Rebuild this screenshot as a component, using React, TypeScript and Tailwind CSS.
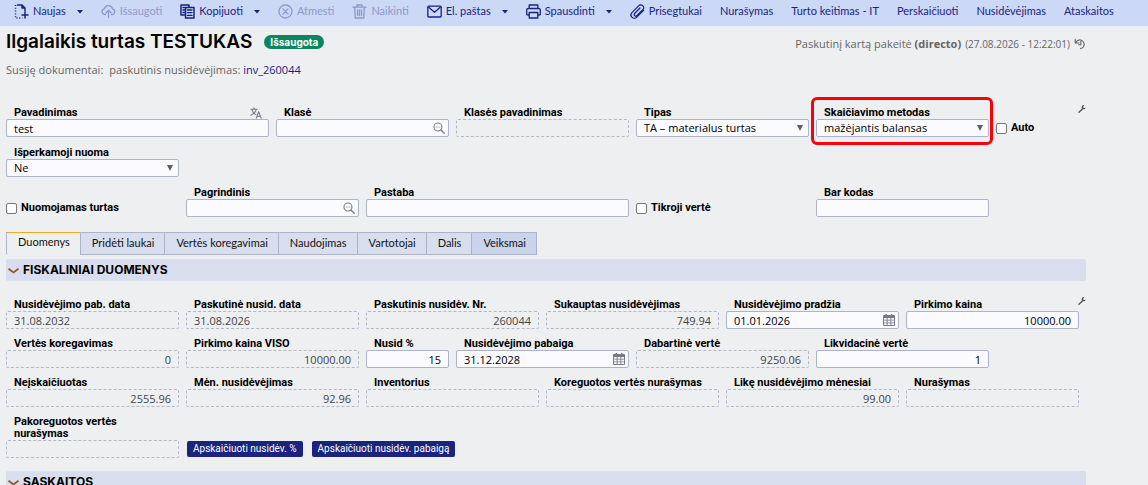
import { ReactNode, useState } from 'react';

const spans: Record<number, string> = {
  1: 'col-span-1',
  2: 'col-span-2',
  3: 'col-span-3',
};

const labelClass = "font-['Roboto',sans-serif] text-[11px] leading-3 font-bold text-black";

const Icon = ({ children, className = "size-[15px]" }: { children: ReactNode; className?: string }) => (
  <svg viewBox="0 0 15 15" fill="none" stroke="currentColor" strokeWidth="1.3" strokeLinecap="round" strokeLinejoin="round" className={`shrink-0 ${className}`} aria-hidden="true">
    {children}
  </svg>
);

const NewIcon = () => (
  <Icon>
    <path d="M1.500 1v13h7" strokeDasharray="1 1.8" strokeWidth="1.5" strokeLinecap="butt" />
    <path d="M3.500 1H8l3 3v3M8 1v3h3M11 8v6M8 11h6" strokeWidth="1.5" />
  </Icon>
);

const UploadIcon = () => (
  <Icon>
    <path d="M4.500 10.500H3.600a2.900 2.900 0 0 1-.3-5.700A4.200 4.200 0 0 1 11.400 4.800a2.900 2.900 0 0 1 0 5.700h-.9M7.500 13.500V6.500M5 8.800l2.500-2.500L10 8.800" />
  </Icon>
);

const CopyIcon = () => (
  <Icon>
    <path d="M4.500 11H1V1h8v2" strokeWidth="1.5" />
    <path d="M3 3.500h1.500M3 6h1.500M3 8.500h1.500" />
    <path d="M5.500 3.500H14V14H5.500z" strokeWidth="1.5" />
    <path d="M7.500 6h4.500M7.500 8.700h4.500M7.500 11.400h4.500" />
  </Icon>
);

const RejectIcon = () => (
  <Icon>
    <circle cx="7.500" cy="7.500" r="6.500" />
    <path d="M5 5l5 5M10 5l-5 5" />
  </Icon>
);

const TrashIcon = () => (
  <Icon>
    <path d="M1 3.200h13M5 3V1h5v2M2.700 3.500l.5 10.500h8.600l.5-10.500M5.500 5.800v5.800M7.500 5.800v5.800M9.500 5.800v5.800" />
  </Icon>
);

const MailIcon = () => (
  <Icon>
    <rect x="0.800" y="2.200" width="13.400" height="10.800" rx="1" />
    <path d="M1.500 3l6 5.200 6-5.200" />
  </Icon>
);

const PrintIcon = () => (
  <Icon>
    <path d="M3.200 4.500V1h8.600v3.500M3.200 11H1.700a1 1 0 0 1-1-1V6a1.500 1.500 0 0 1 1.500-1.500h10.600A1.500 1.500 0 0 1 14.300 6v4a1 1 0 0 1-1 1h-1.500M3.200 8.500h8.600V14H3.200z" />
  </Icon>
);

const ClipIcon = () => (
  <Icon>
    <path d="M13.600 6.300l-6.800 6.900a3.300 3.300 0 0 1-4.900-4.600l6.700-6.800a2.900 2.900 0 0 1 4.300 0 2.700 2.700 0 0 1-.1 3.800l-6 6.100a1.500 1.500 0 0 1-2.200-2.200l5.400-5.500" strokeWidth="1.200" />
  </Icon>
);

const HistoryIcon = () => (
  <Icon className="size-3">
    <path d="M1.500 1.500v4.700h4.700M1.700 6l3-3a5.500 5.500 0 1 1 3.600 10.300M8.500 4.500v4H5.700" strokeWidth="1.4" />
  </Icon>
);

const SearchIcon = () => (
  <Icon className="size-3">
    <circle cx="6.200" cy="6.200" r="5" />
    <path d="M10 10l4 4" strokeWidth="1.700" />
    <path d="M3.800 6.200h.1M6.200 6.200h.1M8.600 6.200h.1" />
  </Icon>
);

const CalendarIcon = () => (
  <svg viewBox="0 0 12 12" className="size-3" aria-hidden="true">
    <path fill="currentColor" fillRule="evenodd" d="M2.500 0h1.500v1h4V0h1.500v1H11a1 1 0 0 1 1 1v9a1 1 0 0 1-1 1H1a1 1 0 0 1-1-1V2a1 1 0 0 1 1-1h1.500zM1 4v1.800h2.700V4zm3.600 0v1.800h2.800V4zm3.700 0v1.800H11V4zM1 6.600v1.800h2.700V6.600zm3.600 0v1.800h2.800V6.600zm3.700 0v1.800H11V6.600zM1 9.200V11h2.700V9.200zm3.600 0V11h2.800V9.200zm3.700 0V11H11V9.200z" />
  </svg>
);

const TranslateIcon = () => (
  <Icon className="size-3">
    <path d="M1 2.800h8M5 1v1.800M2.300 3c.7 3 3 5.300 5 6.500M7.800 3C7 6 4 9 1 10.300M7.800 14l3-8 3.200 8M9 11.500h3.900" />
  </Icon>
);

const WrenchIcon = () => (
  <svg viewBox="0 0 8 8" className="size-2" aria-hidden="true">
    <path d="M1 7.200l3.600-3.500" stroke="#555" strokeWidth="1.400" strokeLinecap="round" />
    <path d="M6.800.6a2 2 0 1 0 .8 2.200l-1.500.3-1-.8.400-1.300z" fill="#555" />
  </svg>
);

const Caret = () => (
  <svg viewBox="0 0 6 4" className="h-1 w-1.5" aria-hidden="true">
    <path d="M0 0h6L3 3.500z" fill="currentColor" />
  </svg>
);

type ToolProps = { label: string; icon?: ReactNode; menu?: boolean; disabled?: boolean };

const ToolButton = ({ label, icon, menu, disabled }: ToolProps) => (
  <div className={`flex items-center gap-[11px] ${disabled ? "text-[#8f98cb]" : "text-[#1a237e]"}`}>
    <button type="button" disabled={disabled} className="flex items-center gap-1 whitespace-nowrap">
      {icon}
      {label}
    </button>
    {menu && (
      <button type="button" aria-label={`${label} meniu`}>
        <Caret />
      </button>
    )}
  </div>
);

type FieldProps = {
  id: string;
  label: string;
  value?: string;
  span?: number;
  readOnly?: boolean;
  right?: boolean;
  icon?: ReactNode;
  labelIcon?: ReactNode;
};

const Field = ({ id, label, value = '', span = 2, readOnly, right, icon, labelIcon }: FieldProps) => {
  const [text, setText] = useState(value);
  return (
    <div className={`${spans[span]} flex flex-col justify-end pr-[7px]`}>
      <div className="flex items-end justify-between pr-[7px] pl-2">
        <label htmlFor={id} className={labelClass}>{label}</label>
        {labelIcon}
      </div>
      <div className="relative">
        <input
          id={id}
          type="text"
          value={text}
          readOnly={readOnly}
          onChange={(e) => setText(e.target.value)}
          className={`block h-[18px] w-full rounded-xs border px-[7px] text-[11px] focus:outline-none focus:border-blue-400 ${readOnly ? "border-dashed border-[#b1b8cc] bg-transparent text-[#444]" : "border-[#abb4ca] bg-[#fafaff] text-black"} ${right ? "text-right" : ""}`}
        />
        {icon && <span className="absolute top-[3px] right-1 text-[#77788a]">{icon}</span>}
      </div>
    </div>
  );
};

const SelectField = ({ id, label, options, highlight }: { id: string; label: string; options: string[]; highlight?: boolean }) => (
  <div className="relative col-span-2 flex flex-col justify-end pr-[7px]">
    <label htmlFor={id} className={`${labelClass} pl-2`}>{label}</label>
    <div className="relative">
      <select id={id} className="block h-[18px] w-full appearance-none rounded-xs border border-[#abb4ca] bg-[#fafaff] px-[7px] text-[11px] leading-4 text-black focus:outline-none">
        {options.map((option) => <option key={option}>{option}</option>)}
      </select>
      <svg viewBox="0 0 6 6" className="pointer-events-none absolute top-1.5 right-1.5 size-1.5" aria-hidden="true">
        <path d="M0 0h6L3 6z" fill="#5c5f6b" />
      </svg>
    </div>
    {highlight && <div className="pointer-events-none absolute -top-2.5 right-[3px] -bottom-2 -left-[5px] rounded-md border-3 border-[#fb0007]" />}
  </div>
);

const CheckField = ({ id, label, span }: { id: string; label: string; span: number }) => (
  <div className={`${spans[span]} flex items-end`}>
    <div className="flex h-[18px] items-center gap-1">
      <input id={id} type="checkbox" className="size-[11px] appearance-none rounded-xs border border-[#767676] bg-white checked:bg-[#1a237e]" />
      <label htmlFor={id} className={labelClass}>{label}</label>
    </div>
  </div>
);

const SettingsButton = () => (
  <button type="button" aria-label="Nustatymai" className="absolute -top-0.5 right-0">
    <WrenchIcon />
  </button>
);

const SectionTitle = ({ title }: { title: string }) => (
  <h2 className="rounded-xs bg-[#d8deee] font-['Inter',sans-serif] text-[12px] font-bold text-black">
    <button type="button" className="flex h-[22px] w-full items-center gap-1 pl-0.5">
      <svg viewBox="0 0 11 6" className="mt-0.5 h-1.5 w-[11px]" fill="none" stroke="#9a5412" strokeWidth="1.700" aria-hidden="true">
        <path d="M0.500 0.800L5.500 4.500l5-3.700" />
      </svg>
      {title}
    </button>
  </h2>
);

const tabs = ['Duomenys', 'Pridėti laukai', 'Vertės koregavimai', 'Naudojimas', 'Vartotojai', 'Dalis', 'Veiksmai'];

const Tabs = () => {
  const [active, setActive] = useState('Duomenys');

  const tabColor = (tab: string) => {
    if (tab === active) return "border-t-[#f0a828] border-b-transparent bg-transparent pb-0.5";
    if (tab === 'Veiksmai') return "border-y-[#abb4ca] bg-[#c9d3e9]";
    return "border-y-[#abb4ca] bg-[#d8deee]";
  };

  return (
    <div role="tablist" className="flex font-['Lato',sans-serif] text-[11px] text-[#111]">
      {tabs.map((tab) => (
        <button
          key={tab}
          type="button"
          role="tab"
          aria-selected={tab === active}
          onClick={() => setActive(tab)}
          className={`h-[23px] border-y border-l border-l-[#abb4ca] pr-2.5 pl-[11px] last:border-r last:border-r-[#abb4ca] ${tabColor(tab)}`}
        >
          {tab}
        </button>
      ))}
    </div>
  );
};

const App = () => {
  return (
    <div className="min-h-screen bg-[#edeff0] font-['Open_Sans','Noto_Sans',sans-serif]">
      <nav className="flex h-[26px] items-center gap-[18px] bg-[#cbd8f6] pb-[3px] pl-3.5 font-['Lato',sans-serif] text-[11px]">
        <ToolButton label="Naujas" icon={<NewIcon />} menu />
        <ToolButton label="Išsaugoti" icon={<UploadIcon />} disabled />
        <ToolButton label="Kopijuoti" icon={<CopyIcon />} menu />
        <ToolButton label="Atmesti" icon={<RejectIcon />} disabled />
        <ToolButton label="Naikinti" icon={<TrashIcon />} disabled />
        <ToolButton label="El. paštas" icon={<MailIcon />} menu />
        <ToolButton label="Spausdinti" icon={<PrintIcon />} menu />
        <ToolButton label="Prisegtukai" icon={<ClipIcon />} />
        <ToolButton label="Nurašymas" />
        <ToolButton label="Turto keitimas - IT" />
        <ToolButton label="Perskaičiuoti" />
        <ToolButton label="Nusidėvėjimas" />
        <ToolButton label="Ataskaitos" />
      </nav>

      <main className="pr-[62px] pl-1.5">
        <header className="flex items-center justify-between pt-1">
          <div className="flex items-center gap-3">
            <h1 className="font-['Inter',sans-serif] text-[19px] leading-6 font-semibold text-black">Ilgalaikis turtas TESTUKAS</h1>
            <span className="rounded-full bg-[#0b8660] px-1.5 font-['Inter',sans-serif] text-[10px] leading-[14px] font-bold text-white">Išsaugota</span>
          </div>
          <div className="flex items-center gap-1 pt-1 text-[11px] text-[#666]">
            <span>Paskutinį kartą pakeitė <b>(directo)</b></span>
            <span className="text-[10px]">(27.08.2026 - 12:22:01)</span>
            <button type="button" aria-label="Istorija"><HistoryIcon /></button>
          </div>
        </header>

        <p className="flex gap-1.5 pt-2 text-[11px] leading-4 text-[#666]">
          <span>Susiję dokumentai:</span>
          <span>paskutinis nusidėvėjimas: <a href="#inv_260044" className="text-[#1a1a8e]">inv_260044</a></span>
        </p>

        <form onSubmit={(e) => e.preventDefault()}>
          <div className="relative mt-[29px] grid grid-cols-12 gap-y-2.5">
            <Field id="name" label="Pavadinimas" value="test" span={3} labelIcon={<span className="h-3 text-[#77788a]"><TranslateIcon /></span>} />
            <Field id="class" label="Klasė" icon={<SearchIcon />} />
            <Field id="class-name" label="Klasės pavadinimas" readOnly />
            <SelectField id="type" label="Tipas" options={['TA – materialus turtas']} />
            <SelectField id="method" label="Skaičiavimo metodas" options={['mažėjantis balansas']} highlight />
            <CheckField id="auto" label="Auto" span={1} />
            <SelectField id="leasing" label="Išperkamoji nuoma" options={['Ne', 'Taip']} />
            <div className="col-span-10" />
            <CheckField id="rented" label="Nuomojamas turtas" span={2} />
            <Field id="main" label="Pagrindinis" icon={<SearchIcon />} />
            <Field id="comment" label="Pastaba" span={3} />
            <CheckField id="fair-value" label="Tikroji vertė" span={2} />
            <Field id="barcode" label="Bar kodas" />
            <SettingsButton />
          </div>

          <div className="pt-[15px] pb-1">
            <Tabs />
          </div>

          <SectionTitle title="FISKALINIAI DUOMENYS" />
          <div className="relative mt-[18px] mb-[13px] grid grid-cols-12 gap-y-[9px]">
            <Field id="end-date" label="Nusidėvėjimo pab. data" value="31.08.2032" readOnly />
            <Field id="last-date" label="Paskutinė nusid. data" value="31.08.2026" readOnly />
            <Field id="last-no" label="Paskutinis nusidėv. Nr." value="260044" readOnly right />
            <Field id="accumulated" label="Sukauptas nusidėvėjimas" value="749.94" readOnly right />
            <Field id="start" label="Nusidėvėjimo pradžia" value="01.01.2026" icon={<CalendarIcon />} />
            <Field id="price" label="Pirkimo kaina" value="10000.00" right />

            <Field id="adjustment" label="Vertės koregavimas" value="0" readOnly right />
            <Field id="price-total" label="Pirkimo kaina VISO" value="10000.00" readOnly right />
            <Field id="percent" label="Nusid %" value="15" span={1} right />
            <Field id="end" label="Nusidėvėjimo pabaiga" value="31.12.2028" icon={<CalendarIcon />} />
            <Field id="current" label="Dabartinė vertė" value="9250.06" readOnly right />
            <Field id="residual" label="Likvidacinė vertė" value="1" right />
            <div className="col-span-1" />

            <Field id="uncounted" label="Neįskaičiuotas" value="2555.96" readOnly right />
            <Field id="monthly" label="Mėn. nusidėvėjimas" value="92.96" readOnly right />
            <Field id="inventory" label="Inventorius" readOnly />
            <Field id="adjusted-off" label="Koreguotos vertės nurašymas" readOnly />
            <Field id="months-left" label="Likę nusidėvėjimo mėnesiai" value="99.00" readOnly right />
            <Field id="write-off" label="Nurašymas" readOnly />

            <Field id="revalued-off" label="Pakoreguotos vertės nurašymas" readOnly />
            <div className="col-span-10 flex items-end gap-[9px] pb-px pl-px font-['Roboto',sans-serif] text-[10px] leading-4 text-white">
              <button type="button" className="rounded-xs bg-[#1a237e] px-1.5 hover:bg-[#283593]">Apskaičiuoti nusidėv. %</button>
              <button type="button" className="rounded-xs bg-[#1a237e] px-1.5 hover:bg-[#283593]">Apskaičiuoti nusidėv. pabaigą</button>
            </div>
            <SettingsButton />
          </div>
          <SectionTitle title="SASKAITOS" />
        </form>
      </main>
    </div>
  );
};

export default App;
